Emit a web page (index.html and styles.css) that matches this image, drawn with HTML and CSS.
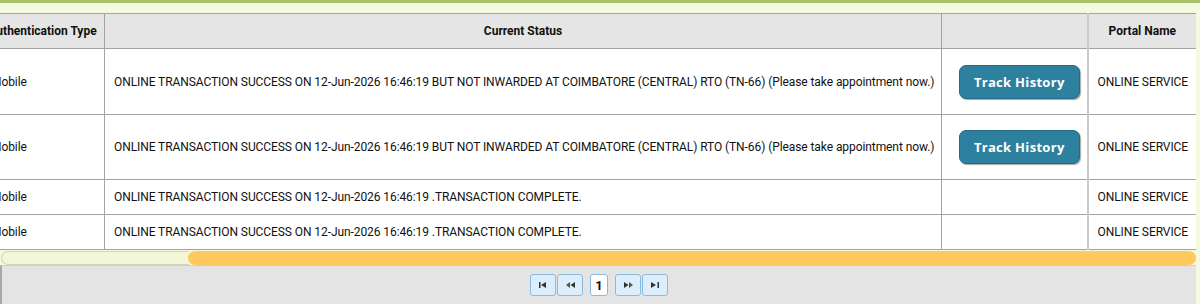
FILE: index.html
```html
<!DOCTYPE html>
<html>
<head>
<meta charset="utf-8">
<link rel="stylesheet" href="styles.css">
</head>
<body>
<div class="page">
  <div class="grid-wrap">
    <div class="viewport">
      <table class="grid">
        <colgroup>
          <col class="c-auth"><col class="c-status"><col class="c-action"><col class="c-portal">
        </colgroup>
        <thead>
          <tr>
            <th class="auth">Authentication Type</th>
            <th>Current Status</th>
            <th></th>
            <th class="sep">Portal Name</th>
          </tr>
        </thead>
        <tbody>
          <tr>
            <td class="first">Mobile</td>
            <td>ONLINE TRANSACTION SUCCESS ON 12-Jun-2026 16:46:19 BUT NOT INWARDED AT COIMBATORE (CENTRAL) RTO (TN-66) (Please take appointment now.)</td>
            <td class="act"><button class="track">Track History</button></td>
            <td class="sep">ONLINE SERVICE</td>
          </tr>
          <tr class="r2">
            <td class="first">Mobile</td>
            <td>ONLINE TRANSACTION SUCCESS ON 12-Jun-2026 16:46:19 BUT NOT INWARDED AT COIMBATORE (CENTRAL) RTO (TN-66) (Please take appointment now.)</td>
            <td class="act"><button class="track">Track History</button></td>
            <td class="sep">ONLINE SERVICE</td>
          </tr>
          <tr>
            <td class="first">Mobile</td>
            <td>ONLINE TRANSACTION SUCCESS ON 12-Jun-2026 16:46:19 .TRANSACTION COMPLETE.</td>
            <td></td>
            <td class="sep">ONLINE SERVICE</td>
          </tr>
          <tr>
            <td class="first">Mobile</td>
            <td>ONLINE TRANSACTION SUCCESS ON 12-Jun-2026 16:46:19 .TRANSACTION COMPLETE.</td>
            <td></td>
            <td class="sep">ONLINE SERVICE</td>
          </tr>
        </tbody>
      </table>
    </div>
    <div class="hscroll">
      <div class="track-left"></div>
      <div class="thumb"></div>
    </div>
    <div class="pager">
      <button class="pbtn" aria-label="First">
        <svg width="8" height="6" viewBox="0 0 8 6"><rect x="0" y="0" width="1.5" height="6" fill="#333"/><path d="M7 0 L2 3 L7 6 Z" fill="#333"/></svg>
      </button>
      <button class="pbtn" aria-label="Previous">
        <svg width="9" height="6" viewBox="0 0 9 6"><path d="M4 0 L0 3 L4 6 Z" fill="#555"/><path d="M9 0 L4.5 3 L9 6 Z" fill="#333"/></svg>
      </button>
      <span class="pnum">1</span>
      <button class="pbtn" aria-label="Next">
        <svg width="9" height="6" viewBox="0 0 9 6"><path d="M0 0 L4.5 3 L0 6 Z" fill="#333"/><path d="M5 0 L9 3 L5 6 Z" fill="#555"/></svg>
      </button>
      <button class="pbtn" aria-label="Last">
        <svg width="8" height="6" viewBox="0 0 8 6"><path d="M0 0 L5 3 L0 6 Z" fill="#333"/><rect x="6.5" y="0" width="1.5" height="6" fill="#333"/></svg>
      </button>
    </div>
  </div>
</div>
</body>
</html>
```

FILE: styles.css
```css
html, body {
  margin: 0;
  padding: 0;
}
body {
  background: #f5f9dd;
  font-family: Roboto, "Liberation Sans", Arial, sans-serif;
  color: #111;
}
.page {
  border-top: 3px solid #a9c06b;
  padding-top: 10px;
  height: 291px;
  overflow: hidden;
}
.grid-wrap {
  width: 1196px;
}
.viewport {
  overflow: hidden;
  width: 1196px;
}
.grid {
  border-collapse: collapse;
  table-layout: fixed;
  width: 1212px;
  margin-left: -16px;
  background: #fff;
  font-size: 12px;
  line-height: 14px;
}
.c-auth { width: 120px; }
.c-status { width: 837px; }
.c-action { width: 146px; }
.c-portal { width: 109px; }

.grid th,
.grid td {
  border: 1px solid #a3a3a3;
  padding: 10px 9px;
  white-space: nowrap;
}
.grid th {
  background: #e5e5e5;
  font-weight: 700;
  text-align: center;
  color: #111;
}
.grid th.auth {
  padding-left: 0;
  padding-right: 4px;
}
.grid td {
  text-align: left;
  letter-spacing: -0.08px;
}
.grid td.first {
  padding-left: 6px;
}
.grid .sep {
  border-left: 2px solid #cacaca;
}
.grid td.act {
  text-align: center;
  padding: 10px 4px 10px 14px;
}
.grid tr.r2 td.act {
  padding-top: 9px;
}
.track {
  display: inline-block;
  width: 121px;
  height: 34px;
  margin: 6px 0 5px;
  background: #2d809e;
  border: 1px solid #236b86;
  border-radius: 7px;
  box-shadow: 1px 1px 1px rgba(0, 0, 0, 0.35);
  color: #fff;
  font-family: "Open Sans", "DejaVu Sans", sans-serif;
  font-weight: 700;
  font-size: 13px;
  letter-spacing: 0.3px;
  cursor: pointer;
  vertical-align: middle;
}

.hscroll {
  display: flex;
  height: 14px;
  margin-top: 1px;
}
.track-left {
  width: 188px;
  margin-left: 1px;
  background: #f3f7d8;
  border: 1px solid #cfd3bf;
  border-right: none;
  border-radius: 7px 0 0 7px;
  box-sizing: border-box;
}
.thumb {
  flex: 1;
  background: #ffc95d;
  border-radius: 7px;
  margin-left: -1px;
}

.pager {
  height: 42px;
  background: #e4e4e4;
  border-left: 2px solid #a8a8a8;
  border-top: 1px solid #cfcfcf;
  display: flex;
  justify-content: center;
  align-items: flex-start;
  padding-top: 8px;
  box-sizing: border-box;
  gap: 1px;
}
.pbtn {
  width: 26px;
  height: 22px;
  padding: 0;
  background: #dceefc;
  border: 1px solid #8cbadb;
  border-radius: 3px;
  display: flex;
  align-items: center;
  justify-content: center;
  cursor: pointer;
}
.pnum {
  width: 18px;
  height: 22px;
  box-sizing: border-box;
  margin: 0 6px;
  background: #fff;
  border: 1px solid #8cbadb;
  border-radius: 3px;
  font-size: 13px;
  font-weight: 700;
  display: flex;
  align-items: center;
  justify-content: center;
  color: #111;
}
```
